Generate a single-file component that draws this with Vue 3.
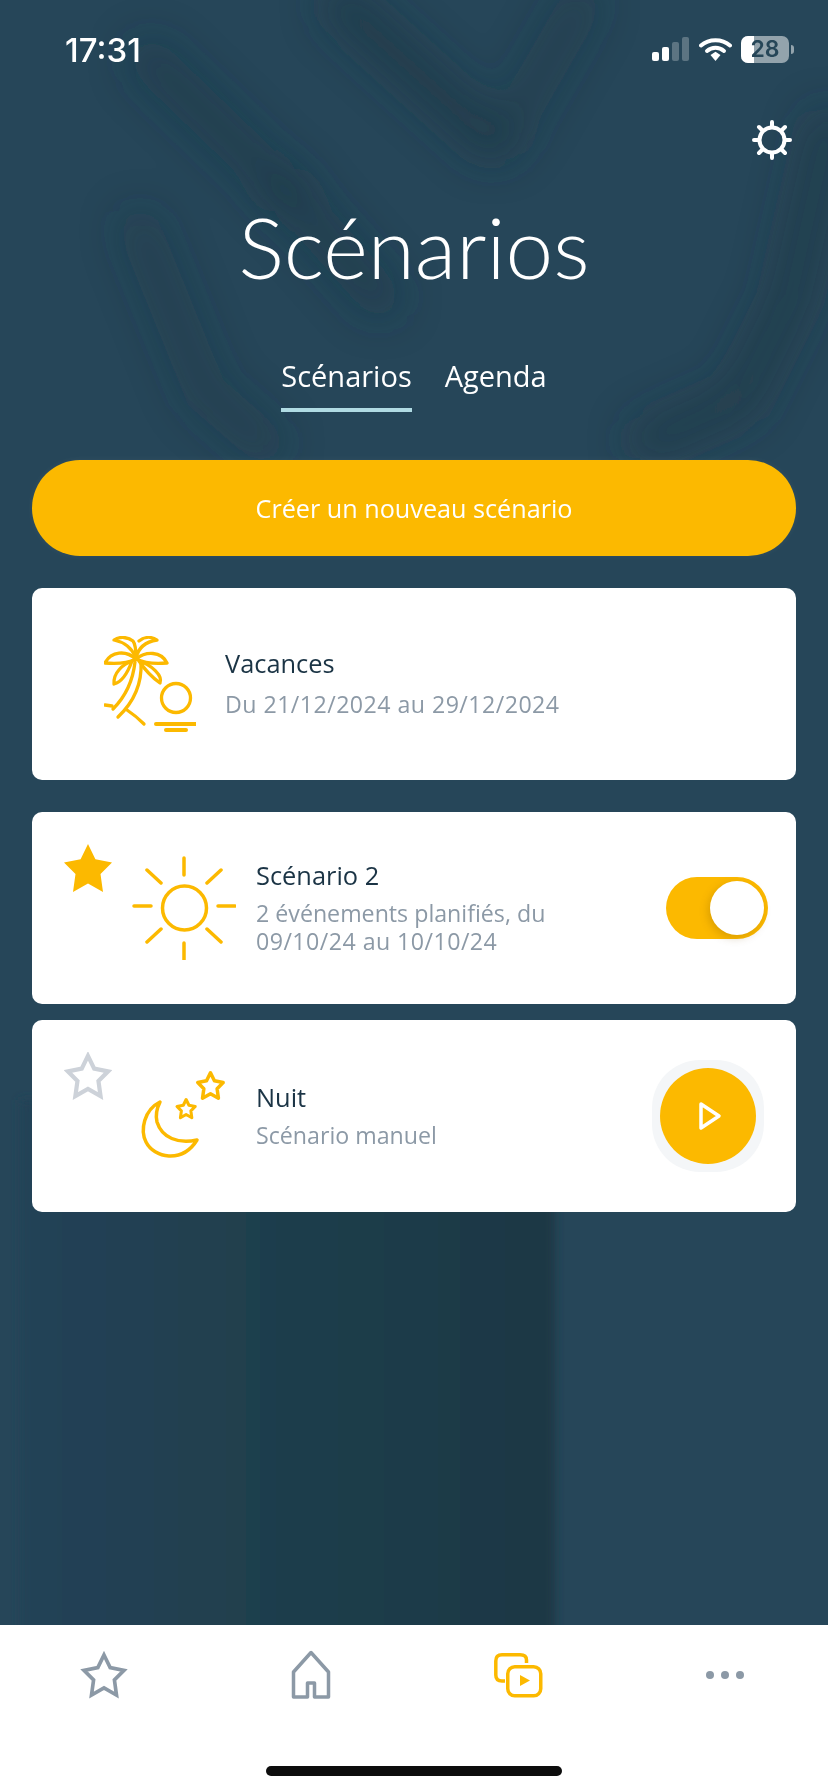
<template>
  <div class="screen">
    <svg class="backdrop" viewBox="0 0 828 1625" aria-hidden="true">
      <defs>
        <filter id="soft" x="-60%" y="-60%" width="220%" height="220%"><feGaussianBlur stdDeviation="20" /></filter>
        <filter id="edge" x="-5%" y="-5%" width="110%" height="110%"><feGaussianBlur stdDeviation="5" /></filter>
        <linearGradient id="shade" x1="0" x2="1" y1="0" y2="0">
          <stop offset="0" stop-color="#214257" />
          <stop offset=".5" stop-color="#1f3e4c" />
          <stop offset="1" stop-color="#1f3744" />
        </linearGradient>
      </defs>
      <g fill="none" stroke="#1d3642" stroke-linecap="round" stroke-width="42" filter="url(#soft)">
        <path d="M150 60 L285 190" opacity=".42" />
        <path d="M343 6 L491 140" opacity=".6" />
        <path d="M580 6 L507 133" opacity=".3" />
        <path d="M285 190 L380 297" opacity=".42" />
        <path d="M140 230 L206 393 L264 443" opacity=".3" />
        <path d="M828 130 L790 300 L740 400 L650 440" opacity=".5" />
      </g>
      <rect x="20" y="1100" width="535" height="540" fill="url(#shade)" filter="url(#edge)" />
    </svg>

    <div class="status">
      <span class="time">17:31</span>
      <div class="status-icons">
        <svg width="38" height="24" viewBox="0 0 38 24">
          <rect x="0" y="15" width="7" height="9" rx="2" fill="#fff" />
          <rect x="10" y="10" width="7" height="14" rx="2" fill="#fff" />
          <rect x="20" y="5" width="7" height="19" rx="2" fill="#fff" opacity=".25" />
          <rect x="30" y="0" width="7" height="24" rx="2" fill="#fff" opacity=".25" />
        </svg>
        <svg width="33" height="24" viewBox="0 0 33 24">
          <path d="M2 8.500 C10 1.500 23 1.500 31 8.500" fill="none" stroke="#fff" stroke-width="4" stroke-linecap="round" />
          <path d="M8 14 C13 9.800 20 9.800 25 14" fill="none" stroke="#fff" stroke-width="4" stroke-linecap="round" />
          <path d="M11.500 18 L16.500 14.800 L21.500 18 L16.500 24 Z" fill="#fff" />
        </svg>
        <div class="battery"><span class="level"></span><span class="pct">28</span><span class="nub"></span></div>
      </div>
    </div>

    <main class="content">
      <div class="gear-row">
        <svg width="40" height="40" viewBox="0 0 40 40" fill="none" stroke="#fff" stroke-width="4" stroke-linecap="round">
          <circle cx="20" cy="20" r="12.500" />
          <path d="M20 2v5M20 33v5M2 20h5M33 20h5M7 7l3.500 3.500M29.500 29.500L33 33M33 7l-3.500 3.500M10.500 29.500L7 33" />
        </svg>
      </div>
      <h1>Scénarios</h1>
      <nav class="tabs">
        <span class="tab active">Scénarios</span>
        <span class="tab">Agenda</span>
      </nav>
      <button class="create">Créer un nouveau scénario</button>

      <section class="card vacation">
        <svg class="palm" width="92" height="96" viewBox="0 0 92 96" fill="none" stroke="#fcb900" stroke-width="3.300" stroke-linecap="round" stroke-linejoin="round">
          <path d="M32 22 C28 12 20 6 10 4 C16 0 24 1 29 5 C32 9 32 16 32 22 C34 13 40 6 53 4 C47 0 40 1 35 5" />
          <path d="M32 23 C22 14 7 15 1 27 C11 28 22 28 32 23 C42 15 57 15 63 27 C52 28 42 28 32 23" />
          <path d="M28 25 C19 28 9 37 10 48 C18 46 24 36 28 25" />
          <path d="M35 25 C41 34 49 42 56 47 C59 40 48 29 35 25" />
          <path d="M31 26 C29 44 22 60 9 73" />
          <path d="M37 26 C38 46 32 64 14 81" />
          <path d="M1 69 L8 70" />
          <path d="M23 74 C29 78 35 83 40 88" />
          <circle cx="72" cy="62" r="14.500" />
          <path d="M52 88 H92" stroke-width="4" />
          <path d="M62 94 H82" stroke-width="4" />
        </svg>
        <div class="info">
          <div class="name">Vacances</div>
          <div class="detail dates">Du 21/12/2024 au 29/12/2024</div>
        </div>
      </section>

      <section class="card scenario">
        <svg class="fav" width="48" height="48" viewBox="0 0 48 48"><path :d="starPath" fill="#fcb900" /></svg>
        <svg class="pic" width="104" height="104" viewBox="0 0 104 104" fill="none" stroke="#fcb900" stroke-width="3.500" stroke-linecap="round">
          <circle cx="52.500" cy="52" r="22" />
          <path d="M52 2v17M52 87v17M2 50h17M86 50h17M15 14l14 13M89 14L75 27M15 86l14-13M89 86L75 73" />
        </svg>
        <div class="info">
          <div class="name">Scénario 2</div>
          <div class="detail">2 événements planifiés, du<br /><span class="dates">09/10/24 au 10/10/24</span></div>
        </div>
        <div class="toggle"><span class="knob"></span></div>
      </section>

      <section class="card scenario">
        <svg class="fav" width="48" height="48" viewBox="0 0 48 48"><path :d="starPath" transform="translate(3.800 3.800) scale(.84)" fill="none" stroke="#cdd2d9" stroke-width="5" /></svg>
        <svg class="pic" width="104" height="104" viewBox="0 0 104 104" fill="none" stroke="#fcb900" stroke-width="3.500" stroke-linejoin="round">
          <path d="M28 38 C12 46 8 66 14 78 C22 94 50 100 65 76 C46 80 30 74 25 58 C23 50 25 44 28 38 Z" />
          <path :d="starPath" transform="translate(45 35.500) scale(.38)" stroke-width="8" />
          <path :d="starPath" transform="translate(65.750 8.750) scale(.53)" stroke-width="6.600" />
        </svg>
        <div class="info">
          <div class="name">Nuit</div>
          <div class="detail">Scénario manuel</div>
        </div>
        <div class="play">
          <span class="play-inner">
            <svg width="24" height="30" viewBox="0 0 24 30" fill="none" stroke="#fff" stroke-width="3.500" stroke-linejoin="round"><path d="M3 3 L21 15 L3 27 Z" /></svg>
          </span>
        </div>
      </section>
    </main>

    <footer class="tabbar">
      <div class="tabbar-icons">
        <svg width="50" height="50" viewBox="0 0 48 48"><path :d="starPath" fill="none" stroke="#8c99a6" stroke-width="4.400" transform="translate(4.800 4.800) scale(.8)" /></svg>
        <svg width="42" height="50" viewBox="0 0 42 50" fill="none" stroke="#8c99a6" stroke-width="3.500" stroke-linejoin="round"><path d="M21 2.500 L3.500 22 V47 H17.500 V33 H24.500 V47 H38.500 V22 Z" /></svg>
        <svg width="50" height="46" viewBox="0 0 50 46" fill="none" stroke="#fcb900" stroke-width="3.500">
          <path d="M33.500 11 V8 Q33.500 2.800 27 2.800 H9 Q2.800 2.800 2.800 9 V23 Q2.800 29 9 29 H12" />
          <rect x="14.750" y="14.750" width="33" height="29" rx="7" />
          <path d="M27 23 L37 28.500 L27 34 Z" fill="#fcb900" stroke="none" />
        </svg>
        <svg width="38" height="10" viewBox="0 0 38 10" fill="#8c99a6"><circle cx="4" cy="5" r="4" /><circle cx="19" cy="5" r="4" /><circle cx="34" cy="5" r="4" /></svg>
      </div>
      <div class="home-bar"></div>
    </footer>
  </div>
</template>

<script setup>
const starPath = 'M24 0 L31.400 15.200 L48 18.500 L36.500 30 L39 48 L24 39.500 L9 48 L11.500 30 L0 18.500 L16.600 15.200 Z'
</script>

<style>
html, body { margin: 0; background: #264658; }
</style>

<style scoped>
.screen {
  position: relative;
  width: 828px;
  height: 1792px;
  display: flex;
  flex-direction: column;
  overflow: hidden;
  background: #264659;
  font-family: "Open Sans", "Noto Sans", sans-serif;
  color: #fff;
}
.backdrop {
  position: absolute;
  left: 0;
  top: 0;
  width: 828px;
  height: 1625px;
}
.status {
  position: relative;
  height: 64px;
  padding: 34px 39px 0 65px;
  box-sizing: border-box;
  display: flex;
  justify-content: space-between;
  align-items: flex-start;
  flex: none;
}
.time {
  font-family: Inter, sans-serif;
  font-size: 33px;
  font-weight: 500;
  line-height: 32px;
}
.status-icons {
  display: flex;
  gap: 9px;
  align-items: flex-start;
  margin-top: 3px;
}
.battery {
  position: relative;
  width: 48px;
  height: 27px;
  margin-top: -1px;
  border-radius: 7px;
  background: #93a3ac;
}
.level {
  position: absolute;
  left: 0;
  top: 0;
  bottom: 0;
  width: 13px;
  background: #fff;
  border-radius: 7px 0 0 7px;
}
.pct {
  position: absolute;
  inset: 0;
  text-align: center;
  font-family: Inter, sans-serif;
  font-size: 23px;
  font-weight: 600;
  line-height: 27px;
  color: #264658;
}
.nub {
  position: absolute;
  right: -5px;
  top: 9px;
  width: 3px;
  height: 9px;
  border-radius: 0 3px 3px 0;
  background: #93a3ac;
}
.content {
  position: relative;
  flex: 1;
  padding: 0 32px;
}
.gear-row {
  display: flex;
  justify-content: flex-end;
  padding: 56px 4px 0 0;
  height: 40px;
}
h1 {
  margin: 36px 0 0;
  text-align: center;
  font-family: Lato, sans-serif;
  font-size: 85.500px;
  font-weight: 300;
  line-height: 100px;
}
.tabs {
  display: flex;
  justify-content: center;
  gap: 33px;
  margin-top: 61px;
}
.tab {
  font-size: 29px;
  line-height: 38px;
  padding-bottom: 13px;
  border-bottom: 4px solid transparent;
}
.tab.active {
  border-bottom-color: #b0dbe3;
}
.create {
  display: block;
  width: 100%;
  height: 96px;
  margin-top: 48px;
  border: none;
  border-radius: 48px;
  background: #fcb900;
  color: #fff;
  font-family: inherit;
  font-size: 25.200px;
  box-shadow: 0 0 6px rgba(255, 255, 255, 0.06);
}
.card {
  display: flex;
  align-items: center;
  height: 192px;
  margin-bottom: 16px;
  border-radius: 10px;
  background: #fff;
  box-sizing: border-box;
  position: relative;
}
.vacation {
  margin-top: 32px;
  margin-bottom: 32px;
  padding-left: 72px;
  gap: 29px;
}
.scenario {
  padding-left: 100px;
  padding-right: 28px;
}
.fav {
  position: absolute;
  left: 32px;
  top: 32px;
}
.info {
  flex: 1;
  padding-bottom: 4px;
}
.scenario .info {
  margin-left: 20px;
}
.name {
  font-size: 25.400px;
  line-height: 34px;
  color: #1b3445;
}
.detail {
  margin-top: 7px;
  font-size: 23.200px;
  line-height: 28px;
  color: #8c99a6;
}
.vacation .detail {
  margin-top: 10px;
}
.dates {
  letter-spacing: 0.45px;
}
.toggle {
  position: relative;
  width: 102px;
  height: 62px;
  border-radius: 31px;
  background: #fcb900;
}
.knob {
  position: absolute;
  right: 4px;
  top: 4px;
  width: 54px;
  height: 54px;
  border-radius: 50%;
  background: #fff;
  box-shadow: -2px 3px 8px rgba(120, 80, 0, 0.25);
}
.play {
  width: 112px;
  height: 112px;
  margin-right: 4px;
  border-radius: 48px;
  background: #f4f6f8;
  display: flex;
  align-items: center;
  justify-content: center;
}
.play-inner {
  width: 96px;
  height: 96px;
  border-radius: 50%;
  background: #fcb900;
  display: flex;
  align-items: center;
  justify-content: center;
  padding-left: 4px;
  box-sizing: border-box;
}
.tabbar {
  position: relative;
  flex: none;
  height: 167px;
  background: #fff;
  box-sizing: border-box;
}
.tabbar-icons {
  display: grid;
  grid-template-columns: repeat(4, 207px);
  justify-items: center;
  align-items: center;
  height: 100px;
}
.home-bar {
  width: 296px;
  height: 10px;
  margin: 41px auto 0;
  border-radius: 5px;
  background: #0d0d0d;
}
</style>
